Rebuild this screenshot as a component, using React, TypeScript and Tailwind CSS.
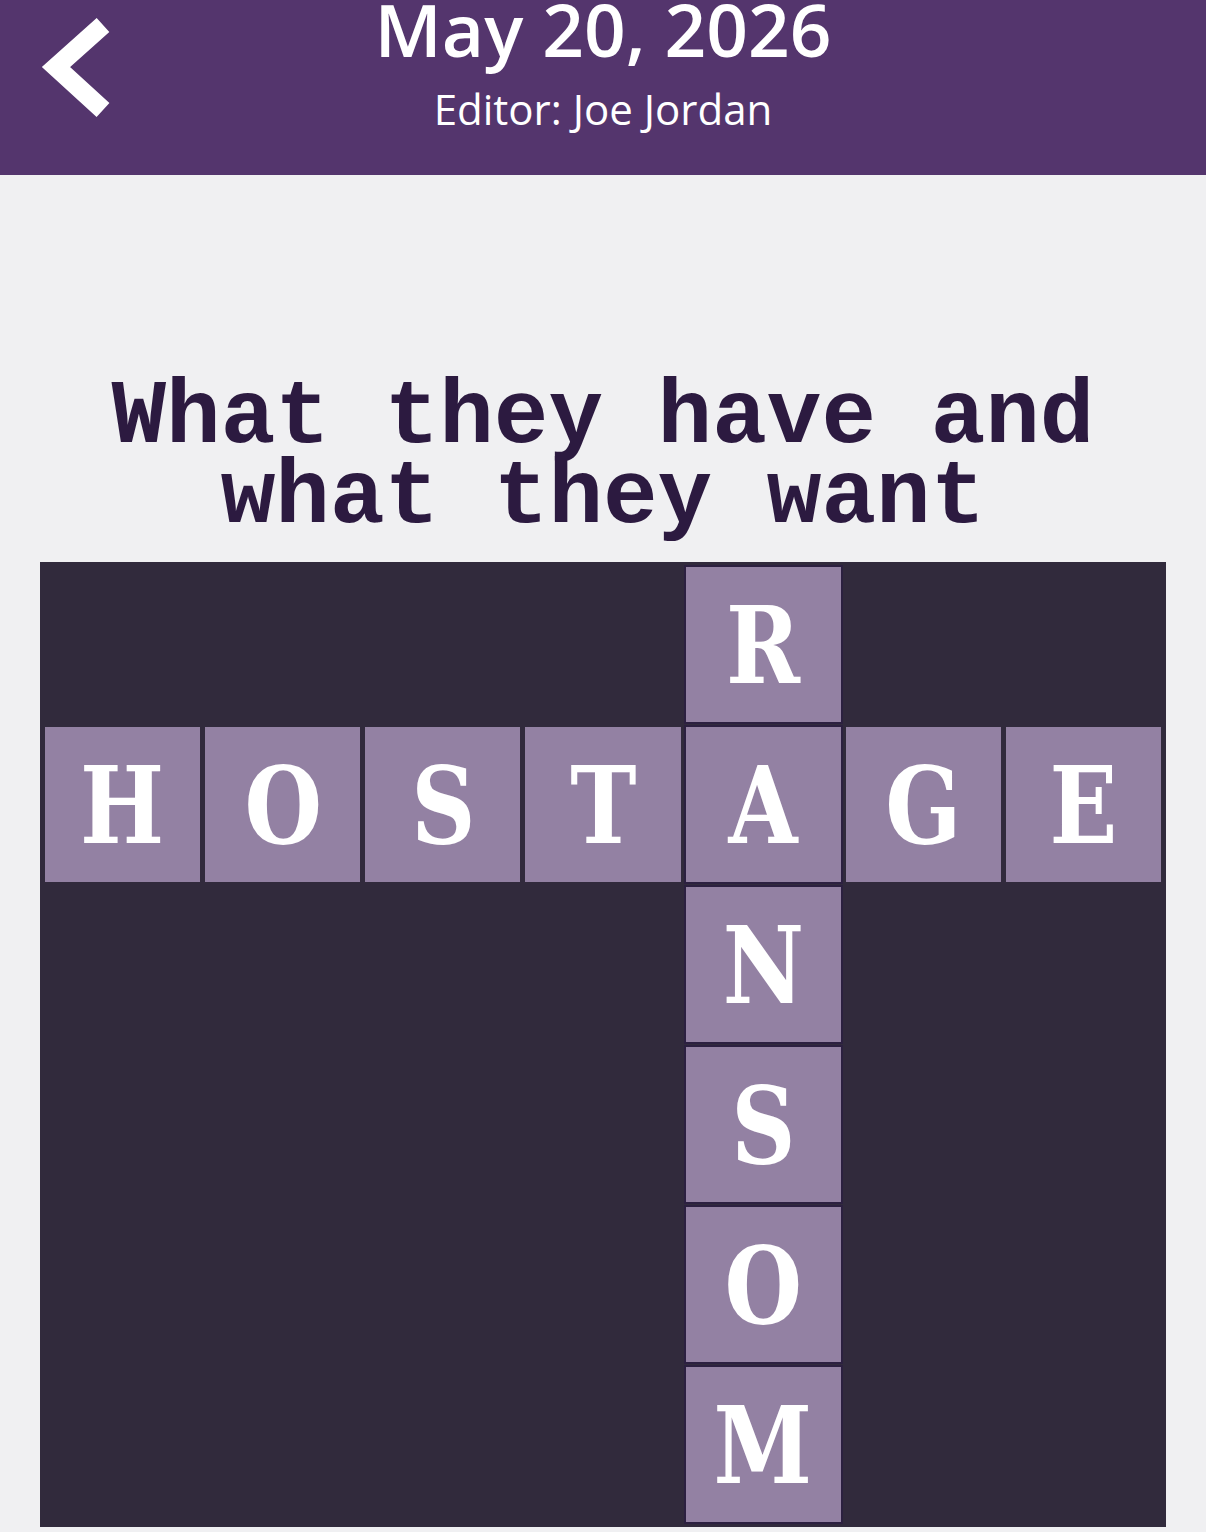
import React from "react";

const COLS = 7;
const ROWS = 6;

// Letters of the crossing words: HOSTAGE across on row 1, RANSOM down in column 4.
const across = "HOSTAGE";
const down = "RANSOM";
const DOWN_COL = 4;
const ACROSS_ROW = 1;

function cellAt(r: number, c: number): { letter: string; inDown: boolean } | null {
  if (r === ACROSS_ROW) return { letter: across[c], inDown: c === DOWN_COL };
  if (c === DOWN_COL && r < down.length) return { letter: down[r], inDown: true };
  return null;
}

function BackChevron() {
  return (
    <svg width="90" height="130" viewBox="0 0 90 130" className="block">
      <polyline
        points="83,25 36,67 83,110"
        fill="none"
        stroke="#ffffff"
        strokeWidth="19"
        strokeLinecap="butt"
        strokeLinejoin="miter"
      />
    </svg>
  );
}

export default function App() {
  const cells: React.ReactNode[] = [];
  for (let r = 0; r < ROWS; r++) {
    for (let c = 0; c < COLS; c++) {
      const cell = cellAt(r, c);
      if (!cell) {
        cells.push(<div key={`${r}-${c}`} />);
      } else {
        cells.push(
          <div
            key={`${r}-${c}`}
            className={
              cell.inDown
                ? "flex items-center justify-center bg-[#9381a3] ring-2 ring-[#2c2040]"
                : "flex items-center justify-center bg-[#9381a3]"
            }
          >
            <span className="inline-block scale-x-[0.84] pt-[2px] text-[106px] font-bold leading-none text-white [font-family:'DejaVu_Serif',serif]">
              {cell.letter}
            </span>
          </div>
        );
      }
    }
  }

  return (
    <div className="min-h-[1532px] w-[1206px] bg-[#f0f0f2]">
      <header className="relative h-[175px] bg-[#54356d] text-white [font-family:'Open_Sans',sans-serif]">
        <div className="absolute left-[20px] top-0">
          <BackChevron />
        </div>
        <div className="flex flex-col items-center">
          <div className="-mt-[8px] text-[73px] font-semibold leading-none">
            May 20, 2026
          </div>
          <div className="mt-[23px] text-[42px] leading-none">
            Editor: Joe Jordan
          </div>
        </div>
      </header>

      <main className="flex flex-col items-center pt-[203px]">
        <h1 className="text-center text-[91px] font-bold leading-[80px] text-[#2c1a40] [font-family:'Liberation_Mono',monospace]">
          What they have and
          <br />
          what they want
        </h1>

        <div className="mt-[24px] grid w-[1126px] grid-cols-7 grid-rows-[repeat(6,155px)] gap-[5px] bg-[#312a3c] p-[5px]">
          {cells}
        </div>
      </main>
    </div>
  );
}
